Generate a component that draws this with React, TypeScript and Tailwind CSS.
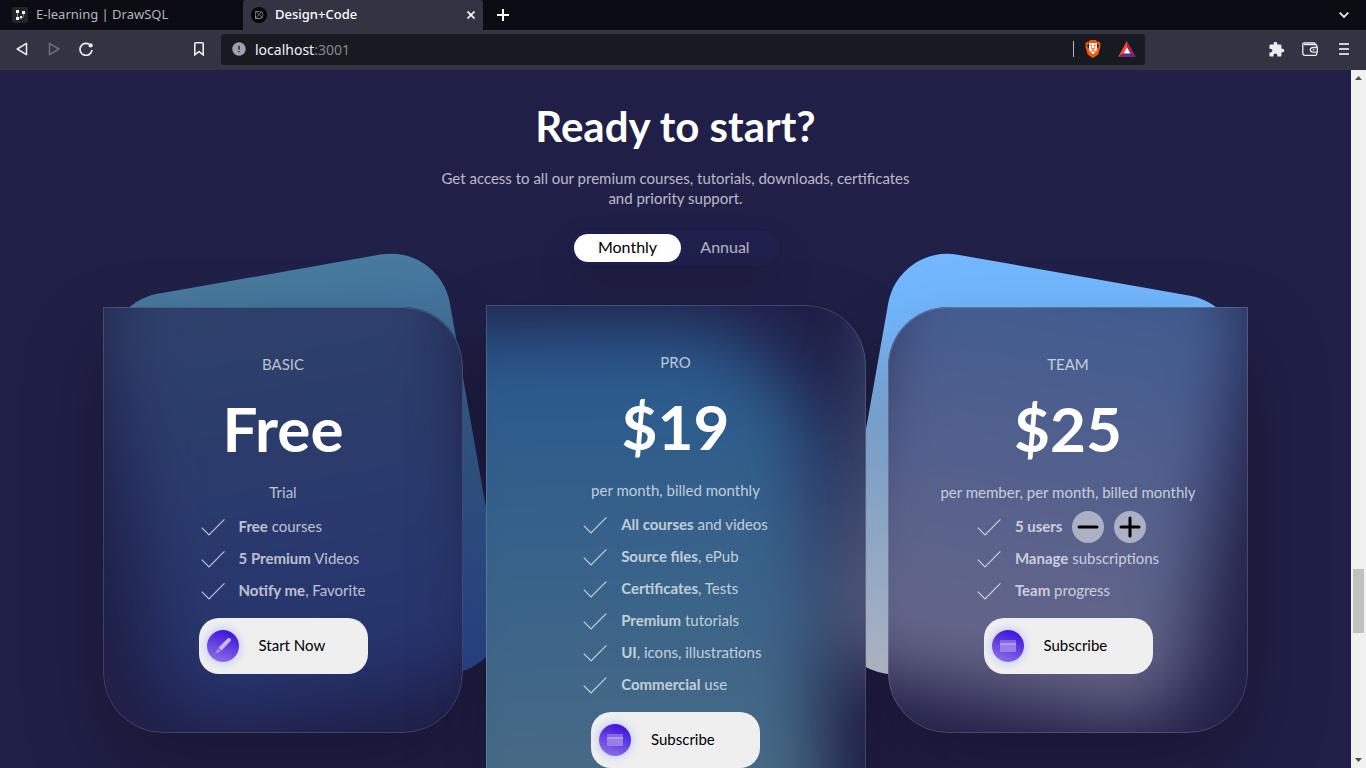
import { useState } from 'react';
import type { ReactNode } from 'react';
import { MdError, MdExtension } from 'react-icons/md';
import { SiBrave } from 'react-icons/si';

type Feature = { strong: string; rest?: string };

type Plan = {
  name: string;
  price: string;
  note: string;
  features: Feature[];
  action: string;
  icon: 'pen' | 'card';
  card: string;
  shape?: string;
  glows: string[];
  seats?: boolean;
};

const plans: Plan[] = [
  {
    name: 'BASIC',
    price: 'Free',
    note: 'Trial',
    features: [
      { strong: 'Free', rest: ' courses' },
      { strong: '5 Premium', rest: ' Videos' },
      { strong: 'Notify me', rest: ', Favorite' },
    ],
    action: 'Start Now',
    icon: 'pen',
    card: 'mt-0.5 w-[360px] rounded-[60px] rounded-tl-none',
    shape:
      'left-[30px] top-[-34px] h-[425px] w-[346px] -rotate-10 rounded-[60px] bg-linear-to-b from-[#487a9e] to-[#2f4f9c]',
    glows: [
      'left-[22px] top-[-80px] h-[475px] w-[362px] -rotate-10 rounded-[60px] bg-linear-to-b from-[#487a9e] to-[#3052ac]',
    ],
  },
  {
    name: 'PRO',
    price: '$19',
    note: 'per month, billed monthly',
    features: [
      { strong: 'All courses', rest: ' and videos' },
      { strong: 'Source files', rest: ', ePub' },
      { strong: 'Certificates', rest: ', Tests' },
      { strong: 'Premium', rest: ' tutorials' },
      { strong: 'UI', rest: ', icons, illustrations' },
      { strong: 'Commercial', rest: ' use' },
    ],
    action: 'Subscribe',
    icon: 'card',
    card: 'w-[380px] rounded-[60px] rounded-tl-none',
    glows: [
      'left-[372px] top-[-34px] h-[425px] w-[356px] rotate-10 rounded-[60px] bg-linear-to-b from-[#73b8ff] to-[#ccd0e6]',
      'left-[-60px] top-[20px] h-[640px] w-[396px] -rotate-1 rounded-tr-[150px] bg-linear-to-b from-[#2fb0f8] to-[#9eecd9]',
    ],
  },
  {
    name: 'TEAM',
    price: '$25',
    note: 'per member, per month, billed monthly',
    features: [
      { strong: '5 users' },
      { strong: 'Manage', rest: ' subscriptions' },
      { strong: 'Team', rest: ' progress' },
    ],
    action: 'Subscribe',
    icon: 'card',
    card: 'mt-0.5 w-[360px] rounded-[60px] rounded-tr-none',
    shape:
      'left-[-29px] top-[-33px] h-[425px] w-[356px] rotate-10 rounded-[60px] bg-linear-to-b from-[#73b8ff] from-15% to-[#d8e0f2]',
    glows: [
      'left-[-34px] top-[-80px] h-[472px] w-[370px] rotate-10 rounded-[60px] bg-linear-to-b from-[#73b8ff] from-15% to-[#d8d2ea]',
    ],
    seats: true,
  },
];

function CheckIcon() {
  return (
    <svg viewBox="0 0 24 18" className="h-[18px] w-6 shrink-0" fill="none" stroke="currentColor" aria-hidden="true">
      <path d="M.8 9.6 8 17 23.4 1.4" strokeWidth="1.2" />
    </svg>
  );
}

function RoundIcon({ kind }: { kind: 'pen' | 'card' }) {
  return (
    <span className="grid size-8 shrink-0 place-items-center rounded-full bg-[linear-gradient(200deg,#4316db_14%,#9076e7_98%)] shadow-[0_0_6px_3px_#ccd6ff]">
      {kind === 'pen' ? (
        <svg viewBox="0 0 16 16" className="size-4" aria-hidden="true">
          <path d="M12.6.6a1.8 1.8 0 0 1 2.7 2.6L6.5 12.6 3.4 9.7Z" fill="#c9b8f6" />
          <path d="M2.9 10.4 5.8 13.2 0 16Z" fill="#a58cee" />
        </svg>
      ) : (
        <svg viewBox="0 0 16 12" className="h-3 w-4" aria-hidden="true">
          <path d="M1 0h14a1 1 0 0 1 1 1v2H0V1a1 1 0 0 1 1-1Z" fill="#8467e4" />
          <path d="M0 3h16v2H0Z" fill="#ae9bee" />
          <path d="M0 5h16v6a1 1 0 0 1-1 1H1a1 1 0 0 1-1-1Z" fill="#987fe9" />
        </svg>
      )}
    </span>
  );
}

function SeatButton({ label, plus, onClick }: { label: string; plus?: boolean; onClick: () => void }) {
  return (
    <button
      type="button"
      aria-label={label}
      onClick={onClick}
      className="grid size-8 place-items-center rounded-full bg-white/50 text-black"
    >
      <svg viewBox="0 0 22 22" className="size-[22px]" stroke="currentColor" strokeWidth="3" strokeLinecap="round" aria-hidden="true">
        <path d={plus ? 'M2 11h18M11 2v18' : 'M2 11h18'} />
      </svg>
    </button>
  );
}

function PlanCard({ plan }: { plan: Plan }) {
  const [seats, setSeats] = useState(5);
  return (
    <div className="relative shrink-0">
      {plan.shape && <div className={`absolute ${plan.shape}`} aria-hidden="true" />}
      <article className={`relative z-10 bg-[#201f47] shadow-[0_35px_80px_rgba(0,0,0,0.28)] ${plan.card}`}>
        <div className="absolute inset-0 overflow-hidden rounded-[inherit]" aria-hidden="true">
          {plan.glows.map((glow) => (
            <div key={glow} className={`absolute opacity-40 blur-[36px] ${glow}`} />
          ))}
          <div className="absolute inset-0 rounded-[inherit] border border-white/15" />
        </div>
        <div className="relative flex flex-col items-center pt-[47px] pb-[59px] text-[15px] leading-5 whitespace-nowrap text-white/70">
          <h3>{plan.name}</h3>
          <p className="mt-[18px] text-[62px] leading-[72px] font-bold text-white">{plan.price}</p>
          <p className="mt-[18px]">{plan.note}</p>
          <ul className="mt-[9px]">
            {plan.features.map((feature, index) => (
              <li key={feature.strong} className="flex h-8 items-center gap-[14px]">
                <CheckIcon />
                <span className="pb-0.5">
                  <strong className="font-bold">
                    {plan.seats && index === 0 ? `${seats} users` : feature.strong}
                  </strong>
                  {feature.rest}
                </span>
                {plan.seats && index === 0 && (
                  <span className="-ml-1 flex gap-[10px]">
                    <SeatButton label="Remove a user" onClick={() => setSeats(Math.max(1, seats - 1))} />
                    <SeatButton label="Add a user" plus onClick={() => setSeats(seats + 1)} />
                  </span>
                )}
              </li>
            ))}
          </ul>
          <button
            type="button"
            className="mt-[11px] flex h-14 w-[169px] items-center gap-5 rounded-[20px] bg-[#efefef] pl-2 text-black"
          >
            <RoundIcon kind={plan.icon} />
            <span className="pb-0.5">{plan.action}</span>
          </button>
        </div>
      </article>
    </div>
  );
}

function IconButton({ label, children, className = '' }: { label: string; children: ReactNode; className?: string }) {
  return (
    <button type="button" aria-label={label} className={`grid h-5 shrink-0 place-items-center ${className || 'w-5'}`}>
      {children}
    </button>
  );
}

function TabBar() {
  return (
    <div className="flex h-[30px] shrink-0 items-center bg-[#0b0b14] text-[13px] text-[#b5b5b9]">
      <div className="flex w-[243px] items-center gap-2 pl-3">
        <svg viewBox="0 0 16 16" className="size-4" aria-hidden="true">
          <rect width="16" height="16" rx="2" fill="#242424" />
          <path d="M5.5 4.5v7M5.5 11.5h3c1.5 0 3-1 3-3v-3" fill="none" stroke="#8b8b8b" />
          <path d="M4 3h3v3H4zM4 10h3v3H4zM10 4h3v3h-3zM8 9h2v2H8z" fill="#f4f4f4" />
        </svg>
        <span>E-learning | DrawSQL</span>
      </div>
      <div className="flex h-full w-60 items-center gap-2 rounded-t-[3px] bg-[#323442] pr-[6px] pl-2 text-white">
        <svg viewBox="0 0 16 16" className="size-4" fill="none" aria-hidden="true">
          <circle cx="8" cy="8" r="8" fill="#050506" />
          <path d="M4.5 4.5h4a3.5 3.5 0 0 1 0 7h-4ZM4.5 4.5l7 6M4.5 11.5l6-7" stroke="#6b8a97" strokeWidth=".8" />
          <path d="M4.5 9v2.5h4a3.5 3.5 0 0 0 2-.7" stroke="#b87cb8" strokeWidth=".8" />
        </svg>
        <span className="flex-1 font-medium">Design+Code</span>
        <IconButton label="Close tab" className="w-3">
          <svg viewBox="0 0 8 8" className="size-2" stroke="currentColor" strokeWidth="1.7" aria-hidden="true">
            <path d="m.5.5 7 7M7.5.5l-7 7" />
          </svg>
        </IconButton>
      </div>
      <IconButton label="New tab" className="ml-[10px] w-5 text-white">
        <svg viewBox="0 0 12 12" className="size-3" stroke="currentColor" strokeWidth="2" aria-hidden="true">
          <path d="M6 0v12M0 6h12" />
        </svg>
      </IconButton>
      <IconButton label="Search tabs" className="mr-3 ml-auto w-5 text-[#e8e8ea]">
        <svg viewBox="0 0 10 6" className="h-[6px] w-[10px]" fill="none" stroke="currentColor" strokeWidth="1.8" aria-hidden="true">
          <path d="m.7.7 4.3 4.3L9.3.7" />
        </svg>
      </IconButton>
    </div>
  );
}

function Toolbar() {
  return (
    <div className="flex h-10 shrink-0 items-center bg-[#323442] pb-0.5">
      <div className="flex w-[221px] items-center gap-3 px-3 text-[#ececee]">
        <IconButton label="Back">
          <svg viewBox="0 0 12 14" className="h-[14px] w-3" fill="none" stroke="currentColor" strokeWidth="1.5" strokeLinejoin="round" aria-hidden="true">
            <path d="M10.5 1.3v11.4L1.2 7Z" />
          </svg>
        </IconButton>
        <IconButton label="Forward" className="w-5 text-[#6c6e79]">
          <svg viewBox="0 0 12 14" className="h-[14px] w-3" fill="none" stroke="currentColor" strokeWidth="1.5" strokeLinejoin="round" aria-hidden="true">
            <path d="M1.5 1.3v11.4L10.8 7Z" />
          </svg>
        </IconButton>
        <IconButton label="Reload">
          <svg viewBox="0 0 14 14" className="size-[14px]" fill="none" stroke="currentColor" strokeWidth="1.7" aria-hidden="true">
            <path d="M10 2.1A6 6 0 1 0 13 8" />
            <circle cx="11.6" cy="3.4" r="2.1" fill="currentColor" stroke="none" />
          </svg>
        </IconButton>
        <IconButton label="Bookmark" className="ml-auto w-5">
          <svg viewBox="0 0 10 14" className="h-[14px] w-[10px]" fill="none" stroke="currentColor" strokeWidth="1.6" aria-hidden="true">
            <path d="M.8 12.8V1.6q0-.8.8-.8h6.8q.8 0 .8.8v11.2L5 9.6Z" />
          </svg>
        </IconButton>
      </div>
      <div className="flex h-[31px] flex-1 items-center rounded-[3px] bg-[#181a21] pr-2 pl-[10px]">
        <MdError className="size-4 text-[#9fa1ac]" aria-hidden="true" />
        <a href="http://localhost:3001" className="ml-2 flex-1 text-[14px] text-[#f2f2f3]">
          localhost<span className="text-[#85878d]">:3001</span>
        </a>
        <span className="h-4 w-px bg-[#b5b6ba]" />
        <IconButton label="Shields" className="ml-[9px] w-5">
          <span className="relative grid size-[18px] place-items-center">
            <span className="absolute inset-x-[5px] top-[3px] bottom-[4px] bg-white" />
            <SiBrave className="relative size-[18px] text-[#fb5407]" />
          </span>
        </IconButton>
        <IconButton label="Rewards" className="ml-[14px] w-5">
          <svg viewBox="0 0 18 16" className="h-4 w-[18px]" aria-hidden="true">
            <path d="M9 0 0 16l5.5-3.5L9 6.3Z" fill="#ff4724" />
            <path d="m9 0 9 16-5.5-3.5L9 6.3Z" fill="#9e1f63" />
            <path d="m0 16 5.5-3.5h7L18 16Z" fill="#662d91" />
            <path d="m9 6.3 3.5 6.2h-7Z" fill="#fff" />
          </svg>
        </IconButton>
      </div>
      <div className="flex w-[221px] items-center justify-end gap-[14px] pr-3 text-[#ececee]">
        <IconButton label="Extensions">
          <MdExtension className="size-[17px]" />
        </IconButton>
        <IconButton label="Wallet">
          <svg viewBox="0 0 16 14" className="h-[14px] w-4" fill="none" stroke="currentColor" strokeWidth="1.3" aria-hidden="true">
            <path d="M14.8 5V3.7a1.2 1.2 0 0 0-1.2-1.2H2M13.2 2.500V2A1.2 1.2 0 0 0 12 .8H2.3A1.5 1.5 0 0 0 .8 2.3v9.2a1.8 1.8 0 0 0 1.8 1.8h10.6a1.6 1.6 0 0 0 1.6-1.6v-1.2" />
            <path d="M15.3 5.5h-4.6a2.3 2.3 0 0 0 0 4.7h4.6Z" />
            <path d="M10.7 7.800h1.6" />
          </svg>
        </IconButton>
        <IconButton label="Menu" className="w-5 text-[#d0d1d5]">
          <svg viewBox="0 0 10 12" className="h-3 w-[10px]" fill="currentColor" aria-hidden="true">
            <path d="M0 0h10v2H0zM0 5h10v2H0zM0 10h10v2H0z" />
          </svg>
        </IconButton>
      </div>
    </div>
  );
}

function Scrollbar() {
  return (
    <div className="flex w-[15px] shrink-0 flex-col items-center justify-between bg-[#f1f1f1] py-[6px]" aria-hidden="true">
      <svg viewBox="0 0 7 4" className="h-1 w-[7px]" fill="#505050">
        <path d="M3.5 0 7 4H0Z" />
      </svg>
      <div className="flex w-full flex-1 flex-col items-center">
        <div className="grow-[489]" />
        <div className="h-16 w-[11px] bg-[#c1c1c1]" />
        <div className="grow-[125]" />
      </div>
      <svg viewBox="0 0 7 4" className="h-1 w-[7px]" fill="#505050">
        <path d="M0 0h7L3.5 4Z" />
      </svg>
    </div>
  );
}

function Pricing() {
  const [period, setPeriod] = useState<'Monthly' | 'Annual'>('Monthly');
  return (
    <main className="flex min-w-0 flex-1 flex-col items-center overflow-hidden bg-[#201f47] pt-[31px] font-[Lato,'Noto_Sans',sans-serif]">
      <h1 className="text-[42px] leading-[50px] font-bold text-white">Ready to start?</h1>
      <p className="mt-[17px] w-[490px] text-center text-[15px] leading-5 text-white/70">
        Get access to all our premium courses, tutorials, downloads, certificates and priority support.
      </p>
      <div className="mt-[21px] flex rounded-full border border-black/10 bg-[#1e1f4b] py-1 pr-3 pl-1 text-[16px] shadow-[0_20px_40px_rgba(0,0,0,0.12)]">
        {(['Monthly', 'Annual'] as const).map((name) => (
          <button
            key={name}
            type="button"
            aria-pressed={period === name}
            onClick={() => setPeriod(name)}
            className={`h-7 rounded-full pb-0.5 ${name === 'Monthly' ? 'w-[107px]' : 'w-[88px]'} ${
              period === name ? 'bg-white text-black' : 'text-white/65'
            }`}
          >
            {name}
          </button>
        ))}
      </div>
      <div className="mt-[38px] flex w-full max-w-[1145px] shrink-0 items-start justify-between">
        {plans.map((plan) => (
          <PlanCard key={plan.name} plan={plan} />
        ))}
      </div>
    </main>
  );
}

export default function App() {
  return (
    <div className="flex h-screen flex-col overflow-hidden font-['Noto_Sans',sans-serif]">
      <TabBar />
      <Toolbar />
      <div className="flex min-h-0 flex-1">
        <Pricing />
        <Scrollbar />
      </div>
    </div>
  );
}
